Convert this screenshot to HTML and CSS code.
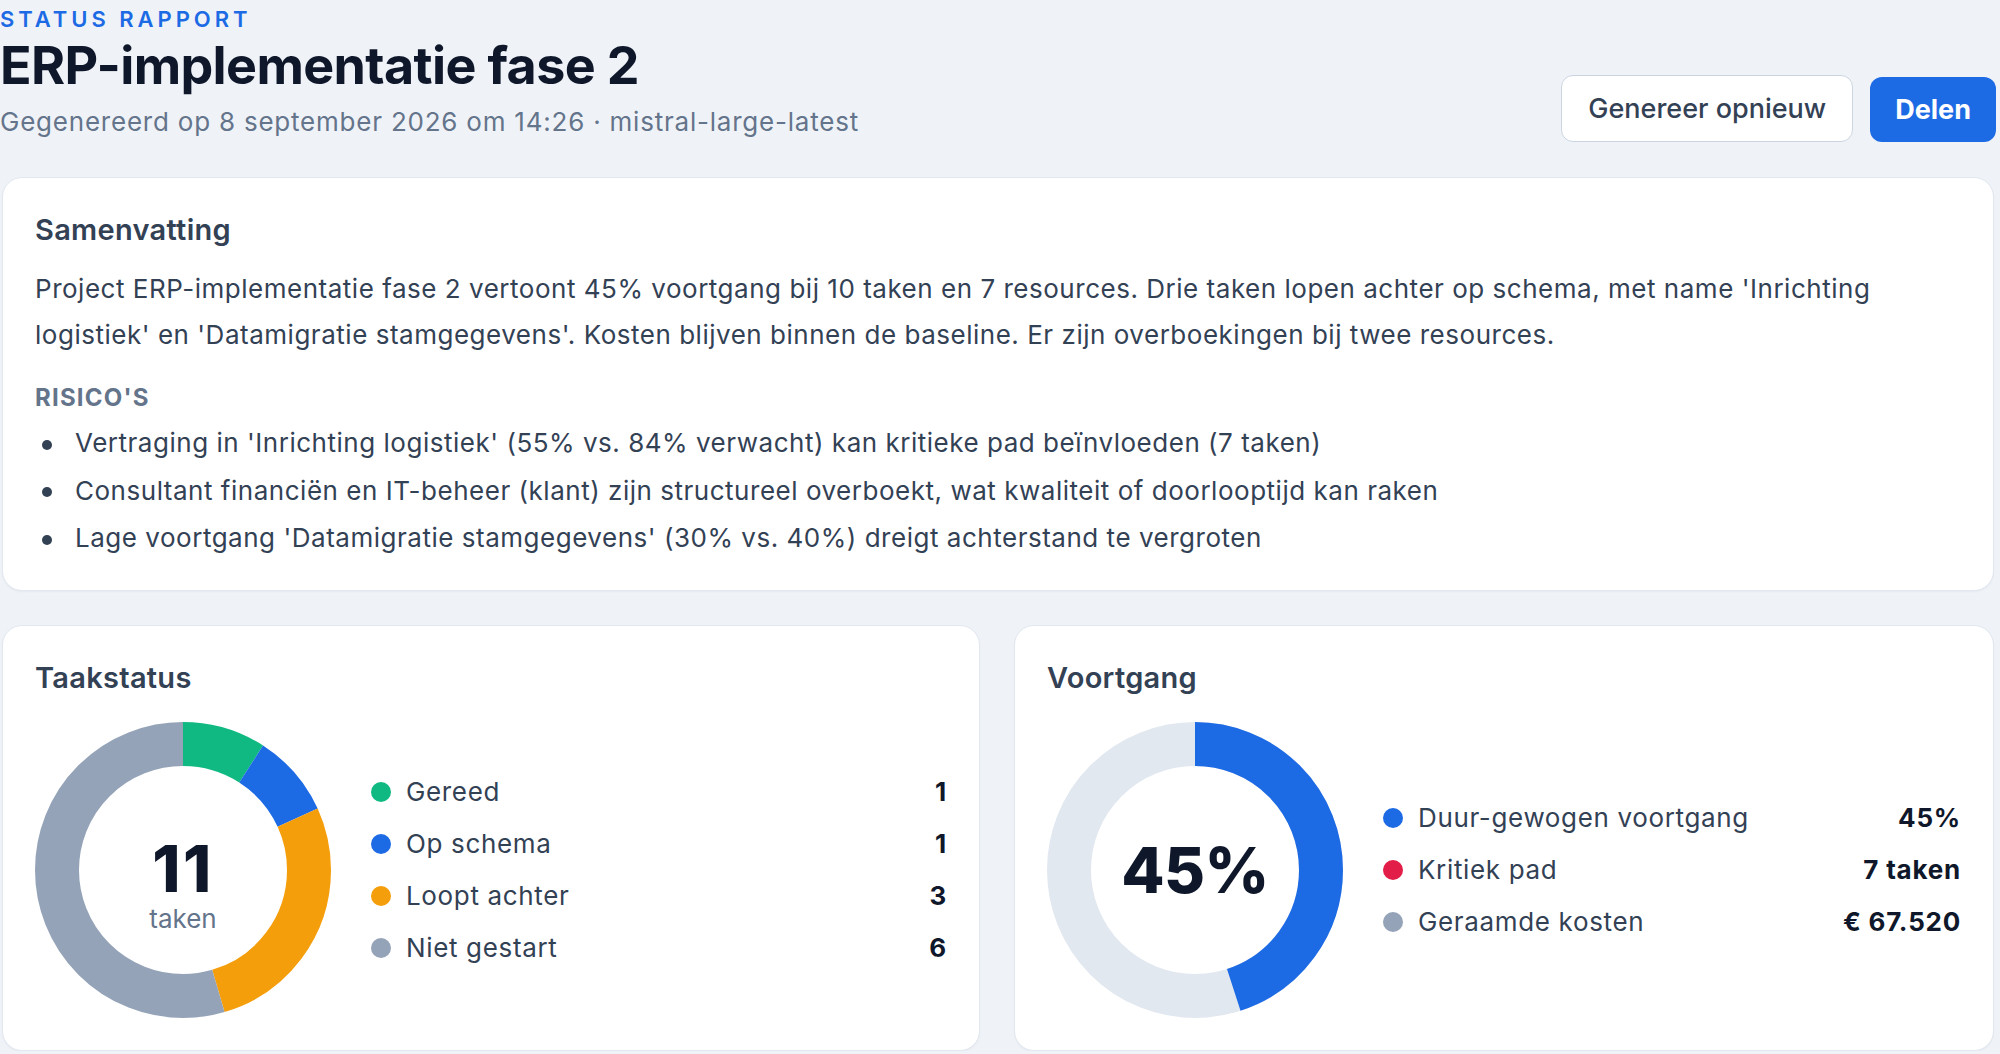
FILE: index.html
```html
<!DOCTYPE html>
<html lang="nl">
<head>
	<meta charset="utf-8">
	<title>Status rapport - ERP-implementatie fase 2</title>
	<meta name="viewport" content="width=device-width, initial-scale=1">
	<link rel="stylesheet" href="styles.css">
</head>
<body>
	<div class="page">
		<header class="top">
			<div class="intro">
				<div class="eyebrow">STATUS RAPPORT</div>
				<h1>ERP-implementatie fase 2</h1>
				<p class="meta">Gegenereerd op 8 september 2026 om 14:26 · mistral-large-latest</p>
			</div>
			<div class="actions">
				<button class="btn">Genereer opnieuw</button>
				<button class="btn primary">Delen</button>
			</div>
		</header>

		<section class="card summary">
			<h2>Samenvatting</h2>
			<p class="summary_text">Project ERP-implementatie fase 2 vertoont 45% voortgang bij 10 taken en 7 resources. Drie taken lopen achter op schema, met name 'Inrichting logistiek' en 'Datamigratie stamgegevens'. Kosten blijven binnen de baseline. Er zijn overboekingen bij twee resources.</p>
			<h3 class="risks_title">RISICO'S</h3>
			<ul class="risks">
				<li>Vertraging in 'Inrichting logistiek' (55% vs. 84% verwacht) kan kritieke pad beïnvloeden (7 taken)</li>
				<li>Consultant financiën en IT-beheer (klant) zijn structureel overboekt, wat kwaliteit of doorlooptijd kan raken</li>
				<li>Lage voortgang 'Datamigratie stamgegevens' (30% vs. 40%) dreigt achterstand te vergroten</li>
			</ul>
		</section>

		<div class="charts">
			<section class="card">
				<h2>Taakstatus</h2>
				<div class="chart_row">
					<div class="donut">
						<!-- r=126, circumference 791.68; segments 1/11, 1/11, 3/11, 6/11 -->
						<svg width="296" height="296" viewBox="0 0 296 296">
							<g transform="rotate(-90 148 148)" fill="none" stroke-width="44">
								<circle cx="148" cy="148" r="126" stroke="#10b981" stroke-dasharray="71.97 719.71" stroke-dashoffset="0"/>
								<circle cx="148" cy="148" r="126" stroke="#1d6ae5" stroke-dasharray="71.97 719.71" stroke-dashoffset="-71.97"/>
								<circle cx="148" cy="148" r="126" stroke="#f59e0b" stroke-dasharray="215.91 575.77" stroke-dashoffset="-143.94"/>
								<circle cx="148" cy="148" r="126" stroke="#94a3b8" stroke-dasharray="431.83 359.85" stroke-dashoffset="-359.85"/>
							</g>
						</svg>
						<div class="donut_center count">
							<span class="big">11</span>
							<span class="unit">taken</span>
						</div>
					</div>
					<ul class="legend">
						<li><span class="dot green"></span><span class="label">Gereed</span><span class="value">1</span></li>
						<li><span class="dot blue"></span><span class="label">Op schema</span><span class="value">1</span></li>
						<li><span class="dot orange"></span><span class="label">Loopt achter</span><span class="value">3</span></li>
						<li><span class="dot grey"></span><span class="label">Niet gestart</span><span class="value">6</span></li>
					</ul>
				</div>
			</section>

			<section class="card">
				<h2>Voortgang</h2>
				<div class="chart_row">
					<div class="donut">
						<svg width="296" height="296" viewBox="0 0 296 296">
							<g transform="rotate(-90 148 148)" fill="none" stroke-width="44">
								<circle cx="148" cy="148" r="126" stroke="#e2e8f0"/>
								<circle cx="148" cy="148" r="126" stroke="#1d6ae5" stroke-dasharray="356.26 435.42"/>
							</g>
						</svg>
						<div class="donut_center">
							<span class="big">45%</span>
						</div>
					</div>
					<ul class="legend">
						<li><span class="dot blue"></span><span class="label">Duur-gewogen voortgang</span><span class="value">45%</span></li>
						<li><span class="dot red"></span><span class="label">Kritiek pad</span><span class="value">7 taken</span></li>
						<li><span class="dot grey"></span><span class="label">Geraamde kosten</span><span class="value">€ 67.520</span></li>
					</ul>
				</div>
			</section>
		</div>
	</div>
</body>
</html>
```

FILE: styles.css
```css
* {
	box-sizing: border-box;
}
body {
	margin: 0;
	background: #eff3f8;
	font-family: Inter, "Noto Sans", sans-serif;
	color: #334155;
}
.page {
	padding: 5px 4px 0 0;
}

/* header */
.top {
	display: flex;
	justify-content: space-between;
	align-items: flex-end;
	margin-bottom: 35px;
}
.eyebrow {
	font-size: 22px;
	line-height: 28px;
	font-weight: 600;
	letter-spacing: 0.18em;
	color: #1d6ae5;
}
.top h1 {
	margin: 3px 0 0;
	font-size: 52px;
	line-height: 60px;
	font-weight: 700;
	letter-spacing: -0.012em;
	color: #0f172a;
}
.meta {
	margin: 6px 0 0;
	font-size: 26px;
	line-height: 40px;
	letter-spacing: 0.03em;
	color: #64748b;
}
.actions {
	display: flex;
	align-items: flex-end;
	gap: 17px;
}
.btn {
	font-family: inherit;
	font-size: 27px;
	line-height: 33px;
	font-weight: 500;
	padding: 16px 26px;
	border: 1px solid #cbd5e1;
	border-radius: 12px;
	background: #fff;
	color: #334155;
}
.btn.primary {
	border: none;
	padding: 16px 25px;
	background: #1d6ae5;
	color: #fff;
	font-weight: 700;
}

/* cards */
.card {
	margin: 0 0 0 2px;
	padding: 32px;
	background: #fff;
	border: 1px solid #e2e8f0;
	border-radius: 20px;
	box-shadow: 0 1px 2px rgba(15, 23, 42, 0.04);
}
.card h2 {
	margin: 0;
	font-size: 29px;
	line-height: 40px;
	font-weight: 600;
	letter-spacing: 0.01em;
	color: #334155;
}
.summary {
	margin-right: 2px;
}
.summary_text {
	margin: 16px 0 0;
	font-size: 26px;
	line-height: 46px;
	letter-spacing: 0.02em;
}
.risks_title {
	margin: 24px 0 0;
	font-size: 24px;
	line-height: 32px;
	font-weight: 700;
	letter-spacing: 0.05em;
	color: #64748b;
}
.risks {
	margin: 9px 0 0;
	padding-left: 40px;
	list-style: none;
	font-size: 26px;
	line-height: 40px;
	letter-spacing: 0.02em;
}
.risks li::before {
	content: "";
	display: inline-block;
	width: 10px;
	height: 10px;
	border-radius: 50%;
	background: currentColor;
	margin: 0 23px 0 -33px;
	vertical-align: middle;
}
.risks li + li {
	margin-top: 7.5px;
}

/* charts */
.charts {
	display: grid;
	grid-template-columns: 1fr 1fr;
	gap: 34px;
	margin: 34px 2px 0 0;
}
.charts .card {
	margin: 0;
}
.charts .card:first-child {
	margin-left: 2px;
}
.chart_row {
	display: flex;
	align-items: center;
	gap: 40px;
	margin-top: 24px;
}
.donut {
	display: grid;
	width: 296px;
	height: 296px;
	flex: none;
}
.donut svg,
.donut_center {
	grid-area: 1 / 1;
}
.donut svg {
	display: block;
}
.donut_center {
	display: flex;
	flex-direction: column;
	align-items: center;
	justify-content: center;
	color: #0f172a;
}
.donut_center .big {
	font-size: 63px;
	line-height: 63px;
	font-weight: 800;
	letter-spacing: -0.01em;
}
.donut_center.count {
	padding-top: 31px;
}
.donut_center.count .big {
	font-size: 64px;
	line-height: 64px;
	letter-spacing: 0.04em;
}
.donut_center .unit {
	margin-top: 3px;
	font-size: 26px;
	line-height: 30px;
	color: #64748b;
}
.legend {
	flex: 1;
	display: flex;
	flex-direction: column;
	gap: 16px;
	margin: 0;
	padding: 0;
	list-style: none;
	font-size: 26px;
	line-height: 36px;
	letter-spacing: 0.025em;
}
.legend li {
	display: flex;
	align-items: center;
}
.dot {
	width: 20px;
	height: 20px;
	border-radius: 50%;
	margin-right: 15px;
	flex: none;
}
.dot.green { background: #10b981; }
.dot.blue { background: #1d6ae5; }
.dot.orange { background: #f59e0b; }
.dot.grey { background: #94a3b8; }
.dot.red { background: #e11d48; }
.legend .value {
	margin-left: auto;
	font-weight: 700;
	letter-spacing: 0.03em;
	color: #0f172a;
}
```
